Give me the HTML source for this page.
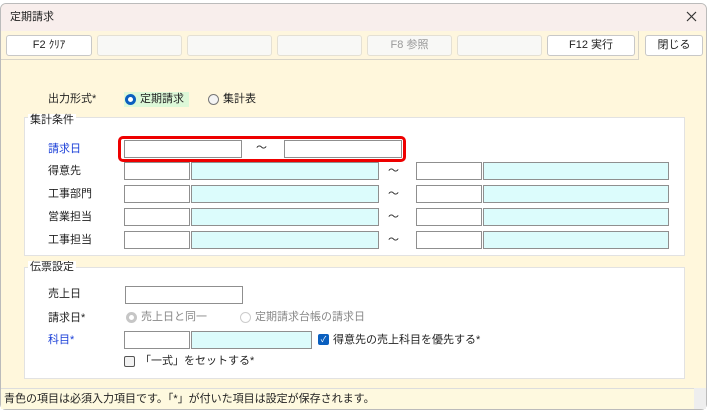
<!DOCTYPE html>
<html><head><meta charset="utf-8"><style>
*{box-sizing:border-box;margin:0;padding:0}
body{width:710px;height:413px;background:#fff;position:relative;overflow:hidden;font-family:"Liberation Sans","Noto Sans CJK JP",sans-serif;font-size:11px;color:#222}
.a{position:absolute}
.win{left:0;top:3px;width:707px;height:407px;border:1px solid #bbb;border-radius:6px;background:#fff7dc;overflow:hidden}
.t{white-space:nowrap;line-height:13px}
.btn{position:absolute;top:35px;height:21px;border:1px solid #e4e0d4;border-radius:3px;background:#f8f8f6;text-align:center;line-height:19px;font-size:11px}
.btn.on{background:#fff;border-color:#c8c8c8}
.in{position:absolute;height:18px;border:1px solid #8f8f8f;background:#fff}
.cy{background:#dcfcfc}
.fs{position:absolute;left:24px;width:661px;background:#fff;border:1px solid #e2e2e2}
.lg{position:absolute;background:#fff;padding:0 2px}
</style></head><body>
<div class="a win">
 <div class="a" style="left:0;top:0;width:707px;height:27px;background:#f8eeec"></div>
 <div class="a" style="left:0;top:27px;width:638px;height:29px;background:#fef6de;border-bottom:1px solid #d8d4c8;border-right:1px solid #d8d4c8"></div>
</div>
<div class="a t" style="left:10px;top:11px;font-size:11px">定期請求</div>
<svg class="a" style="left:686px;top:11px" width="11" height="11"><path d="M1 1L10 10M10 1L1 10" stroke="#333" stroke-width="1.2"/></svg>
<div class="btn on" style="left:6px;width:86px">F2 ｸﾘｱ</div>
<div class="btn" style="left:97px;width:85px"></div>
<div class="btn" style="left:187px;width:85px"></div>
<div class="btn" style="left:277px;width:85px"></div>
<div class="btn" style="left:367px;width:85px;color:#999">F8 参照</div>
<div class="btn" style="left:457px;width:85px"></div>
<div class="btn on" style="left:547px;width:88px">F12 実行</div>
<div class="btn on" style="left:645px;width:58px">閉じる</div>

<div class="a t" style="left:48px;top:93px">出力形式*</div>
<div class="a" style="left:124px;top:92px;width:65px;height:15px;background:#ddf8d8"></div>
<div class="a" style="left:125px;top:94px;width:11px;height:11px;border-radius:50%;border:3px solid #0a5fbf;background:#fff"></div>
<div class="a t" style="left:140px;top:93px">定期請求</div>
<div class="a" style="left:208px;top:94px;width:11px;height:11px;border-radius:50%;border:1px solid #777;background:#f4f4f4"></div>
<div class="a t" style="left:223px;top:93px">集計表</div>

<div class="fs" style="top:117px;height:139px"></div>
<div class="lg t" style="left:28px;top:114px">集計条件</div>
<div class="a t" style="left:48px;top:143px;color:#1a3fd8">請求日</div>
<div class="a" style="left:118px;top:136px;width:288px;height:26px;border:3px solid #e00;border-radius:5px"></div>
<div class="in" style="left:124px;top:140px;width:118px"></div>
<div class="a t" style="left:256px;top:142px">〜</div>
<div class="in" style="left:284px;top:140px;width:118px"></div>

<div class="a t" style="left:48px;top:165px">得意先</div>
<div class="a t" style="left:48px;top:188px">工事部門</div>
<div class="a t" style="left:48px;top:211px">営業担当</div>
<div class="a t" style="left:48px;top:234px">工事担当</div>
<div class="in" style="left:124px;top:162px;width:66px"></div><div class="in cy" style="left:191px;top:162px;width:188px"></div><div class="a t" style="left:388px;top:165px">〜</div><div class="in" style="left:416px;top:162px;width:66px"></div><div class="in cy" style="left:483px;top:162px;width:186px"></div>
<div class="in" style="left:124px;top:185px;width:66px"></div><div class="in cy" style="left:191px;top:185px;width:188px"></div><div class="a t" style="left:388px;top:188px">〜</div><div class="in" style="left:416px;top:185px;width:66px"></div><div class="in cy" style="left:483px;top:185px;width:186px"></div>
<div class="in" style="left:124px;top:208px;width:66px"></div><div class="in cy" style="left:191px;top:208px;width:188px"></div><div class="a t" style="left:388px;top:211px">〜</div><div class="in" style="left:416px;top:208px;width:66px"></div><div class="in cy" style="left:483px;top:208px;width:186px"></div>
<div class="in" style="left:124px;top:231px;width:66px"></div><div class="in cy" style="left:191px;top:231px;width:188px"></div><div class="a t" style="left:388px;top:234px">〜</div><div class="in" style="left:416px;top:231px;width:66px"></div><div class="in cy" style="left:483px;top:231px;width:186px"></div>

<div class="fs" style="top:267px;height:112px"></div>
<div class="lg t" style="left:28px;top:261px">伝票設定</div>
<div class="a t" style="left:48px;top:288px">売上日</div>
<div class="in" style="left:125px;top:286px;width:118px"></div>
<div class="a t" style="left:48px;top:312px">請求日*</div>
<div class="a" style="left:126px;top:312px;width:11px;height:11px;border-radius:50%;border:3px solid #c6c6c6;background:#fff"></div>
<div class="a t" style="left:141px;top:311px;color:#888">売上日と同一</div>
<div class="a" style="left:240px;top:312px;width:11px;height:11px;border-radius:50%;border:1px solid #ccc;background:#fff"></div>
<div class="a t" style="left:255px;top:311px;color:#888">定期請求台帳の請求日</div>
<div class="a t" style="left:48px;top:334px;color:#1a3fd8">科目*</div>
<div class="in" style="left:124px;top:331px;width:66px"></div><div class="in cy" style="left:191px;top:331px;width:121px"></div>
<div class="a" style="left:318px;top:334px;width:11px;height:11px;border-radius:2px;background:#0a5fbf;color:#fff;font-size:8px;line-height:11px;text-align:center">✓</div>
<div class="a t" style="left:333px;top:334px">得意先の売上科目を優先する*</div>
<div class="a" style="left:124px;top:356px;width:11px;height:11px;border-radius:2px;border:1px solid #555;background:#f2f2f2"></div>
<div class="a t" style="left:140px;top:355px">「一式」をセットする*</div>

<div class="a" style="left:1px;top:388px;width:693px;height:21px;background:#fef9df;border-top:1px solid #ddd"></div>
<div class="a" style="left:694px;top:388px;width:12px;height:21px;background:#eee"></div>
<div class="a t" style="left:4px;top:393px">青色の項目は必須入力項目です。「*」が付いた項目は設定が保存されます。</div>
</body></html>
